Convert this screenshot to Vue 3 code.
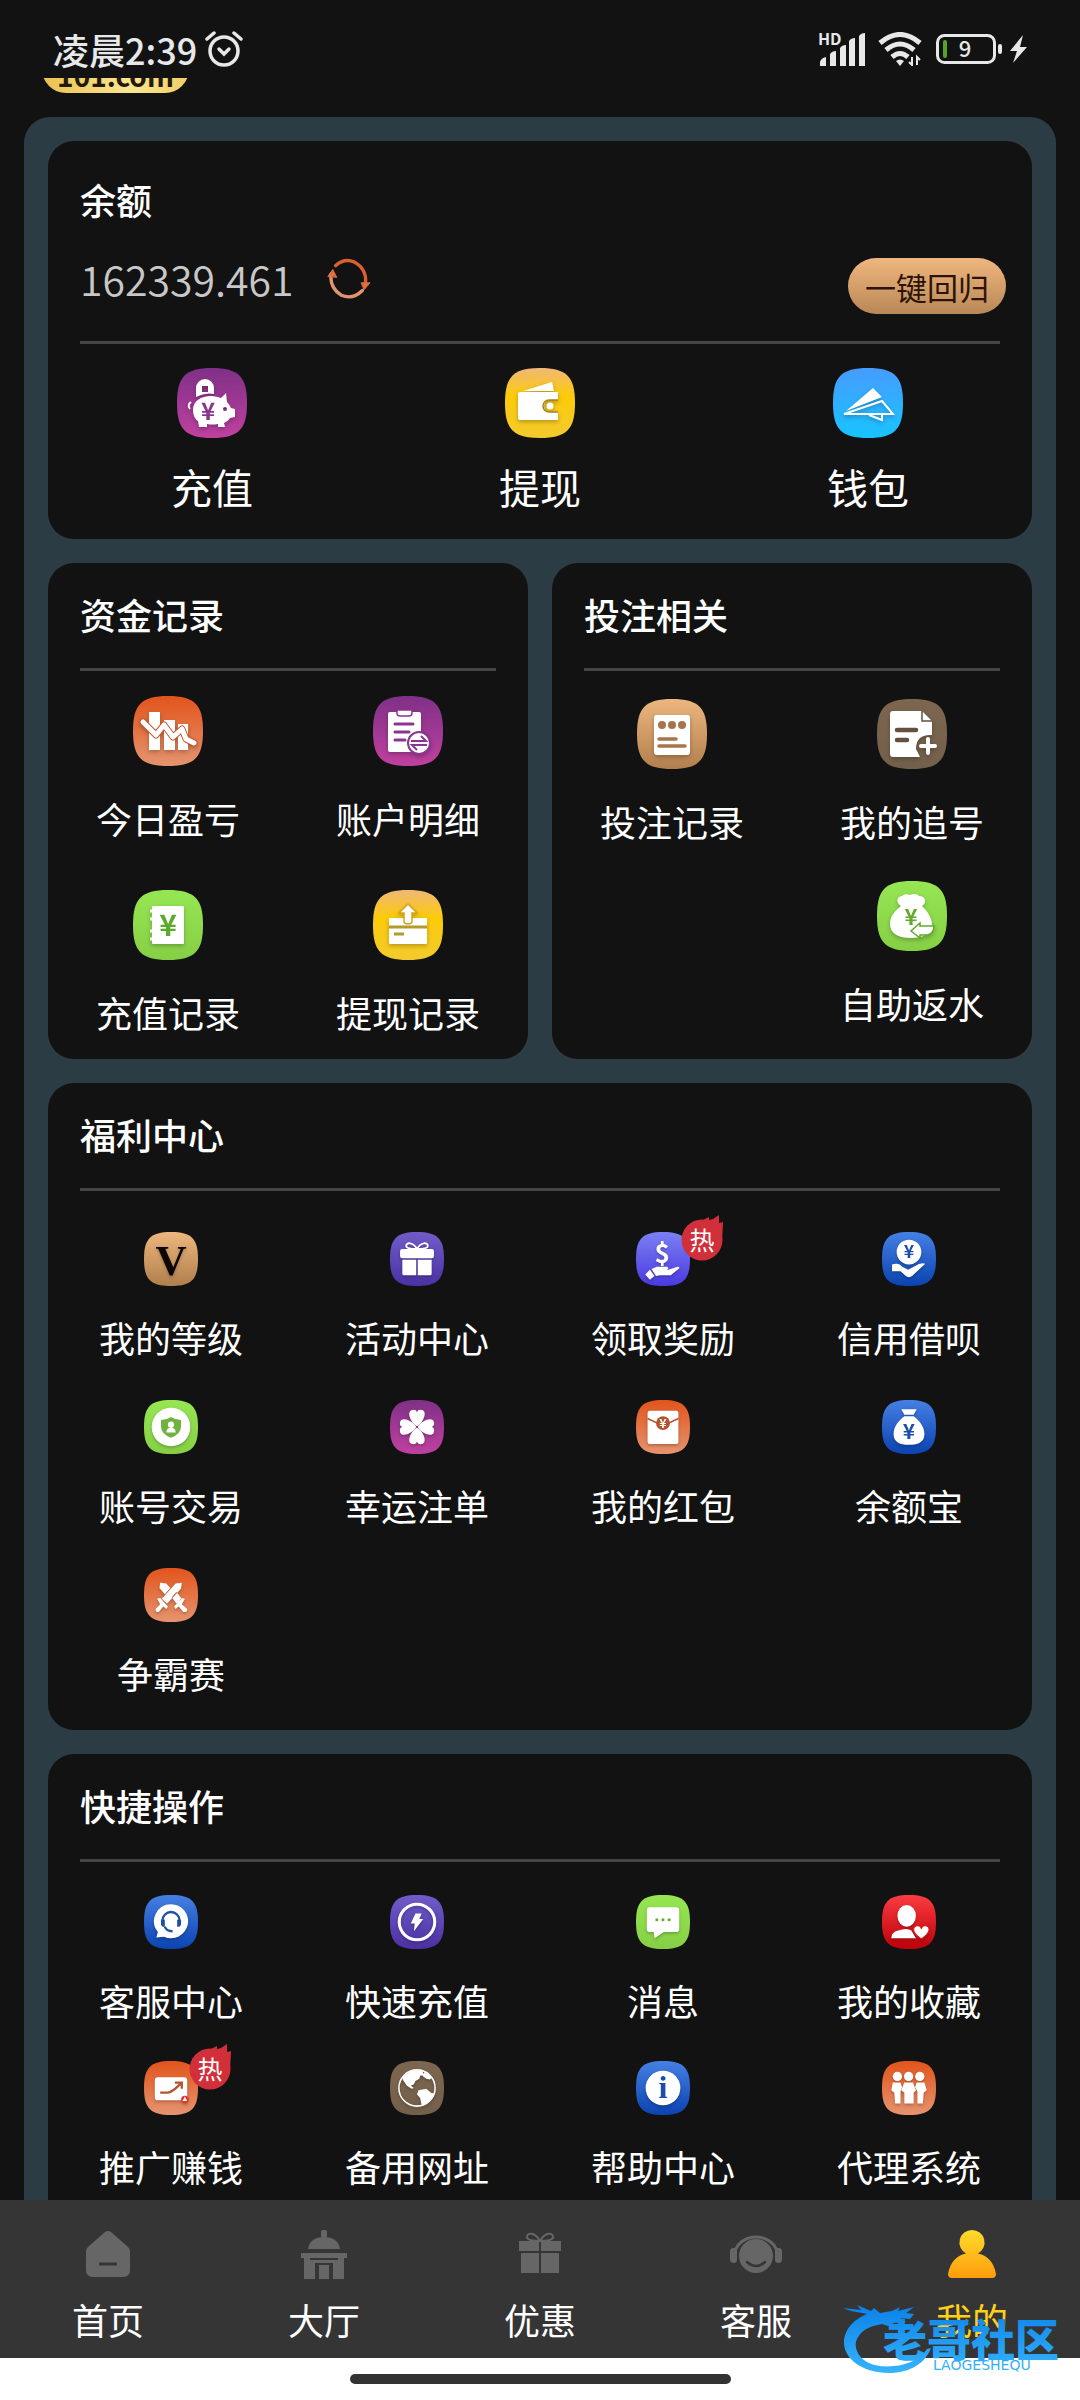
<script setup>
import { ref } from 'vue'

const balance = ref('162339.461')
const activeTab = ref('mine')

const gradients = [
  { id: 'orange', from: '#e2541c', to: '#e5946f' },
  { id: 'purple', from: '#7f3087', to: '#c0419f' },
  { id: 'green', from: '#96e653', to: '#86cf45' },
  { id: 'yellow', from: '#f0b878', mid: '#fccb08', to: '#f3ca2e' },
  { id: 'sky', from: '#469cff', to: '#18c4ff' },
  { id: 'bronze', from: '#edb67e', to: '#b17f4d' },
  { id: 'brown', from: '#7d664f', to: '#73604b' },
  { id: 'violet', from: '#705cc9', to: '#4b31a3' },
  { id: 'indigo', from: '#7c80f4', to: '#4a3ae2' },
  { id: 'blue', from: '#4580e4', to: '#0b43b0' },
  { id: 'red', from: '#fb3c41', to: '#bd0009' },
  { id: 'gold', from: '#ffdc2b', to: '#ff9d0c' }
]

const glyphs = {
  pig: `<path fill-rule="evenodd" d="M28 11a9 9 0 0 1 9 9v6q-9-2-18 3v-9a9 9 0 0 1 9-9zM25 18v6h6v-6z"/>
    <path d="M14 34q-4 3-1 7" stroke="#fff" stroke-width="2" fill="none"/>
    <path d="M16 42c0-9 8-14 18-14 4 0 7 1 10 2l5-5 1 9c2 2 3 4 4 6l4 1v8l-5 1c-2 3-4 4-6 5l1 4h-7v-3q-6 1-11 0v3h-8l-1-6c-3-2-5-6-5-11z"/>
    <circle cx="48" cy="41" r="2" fill="#7d2c85"/><text x="31" y="52" font-size="24" fill="#8a3590">¥</text>`,
  wallet: `<path d="M18 23L47 14l2 9z"/><path d="M15 24h38v8h-8a6 6 0 0 0 0 12h8v8H15q-2 0-2-2V26q0-2 2-2z"/>
    <path d="M53 32h-9a6 6 0 0 0 0 12h9" fill="none" stroke="#9e8423" stroke-width="1.500"/><circle cx="45" cy="38" r="3.500"/>`,
  plane: `<path d="M40 20L13 43l36-14z"/><path d="M49 33L11 46h49z" fill="none" stroke="#fff" stroke-width="2"/><path d="M36 47l13 5v-5" fill="none" stroke="#fff" stroke-width="2"/>`,
  loss: `<path d="M16 16h11v38H16zM31 24h11v30H31zM45 28h10v26H45z"/>
    <path d="M10 26L23 39l8-10 9 12 9-8 4 10 8 4" fill="none" stroke="#c4562b" stroke-width="7" stroke-linecap="round" stroke-linejoin="round"/>
    <path d="M10 26L23 39l8-10 9 12 9-8 4 10 8 4" fill="none" stroke="#fff" stroke-width="5" stroke-linecap="round" stroke-linejoin="round"/>`,
  clipboard: `<rect x="15" y="16" width="33" height="40" rx="2"/><path d="M24 14h15v3q0 3-3 3h-9q-3 0-3-3z" stroke="#8a3590" stroke-width="1.500"/>
    <path d="M22 28h18M22 36h14M22 44h10" stroke="#8a3590" stroke-width="3" stroke-linecap="round"/>
    <circle cx="46" cy="47" r="11" stroke="#8a3590" stroke-width="2"/><path d="M38 45h15l-5-5M54 49H39l5 5" fill="none" stroke="#8a3590" stroke-width="2"/>`,
  ledger: `<rect x="19" y="16" width="32" height="38" rx="1"/><path d="M17 21h4M17 29h4M17 41h4M17 49h4" stroke="#fff" stroke-width="3"/>
    <text x="35" y="46" font-size="30" fill="#5da92d">¥</text>`,
  cardUp: `<rect x="16" y="28" width="38" height="26" rx="1"/><path d="M16 37h38M21 44h10" stroke="#b39a2e" stroke-width="3"/>
    <path d="M35 14l9 9h-5v8q0 3-4 3t-4-3v-8h-5z" stroke="#d0a714" stroke-width="1.500"/>`,
  note: `<rect x="17" y="16" width="36" height="40" rx="3"/><g fill="#a3764c"><circle cx="25" cy="26" r="4"/><circle cx="35" cy="26" r="4"/><circle cx="45" cy="26" r="4"/></g>
    <path d="M22 40h17M22 47h26" stroke="#a3764c" stroke-width="3.500" stroke-linecap="round"/>`,
  docPlus: `<path d="M16 12h29l10 10v14q-16-1-16 14l4 8H16q-3 0-3-3V15q0-3 3-3z"/><path d="M45 12v10h10" fill="none" stroke="#63503e" stroke-width="1.500"/>
    <path d="M20 31h19M20 41h10" stroke="#63503e" stroke-width="4.500" stroke-linecap="round"/><path d="M51 40v14M44 47h14" stroke="#fff" stroke-width="4" stroke-linecap="round"/>`,
  bag: `<path d="M24 25c-5-3-5-9 1-10 2-2 5-2 8-1 4-2 8-1 9 1 7 0 8 7 3 10 6 6 10 12 10 19 0 9-9 13-21 13S13 53 13 43c0-8 5-13 11-18z"/>
    <text x="34" y="44" font-size="22" fill="#62a92e">¥</text><path d="M57 45H43v-3l-9 8 9 7v-3h8q6-2 6-9z" stroke="#62a92e" stroke-width="1.500"/>`,
  vip: `<text x="35" y="56" font-size="56" fill="#0c0704" class="serif">V</text>`,
  gift: `<path d="M35 22c-5-9-14-9-14-4q0 4 14 4c5-9 14-9 14-4q0 4-14 4z" fill="none" stroke="#fff" stroke-width="2.500"/>
    <rect x="13" y="22" width="44" height="12" rx="3"/><path d="M16 36h18v20H18q-2 0-2-2zM36 36h18v18q0 2-2 2H36z"/>`,
  reward: `<text x="34" y="40" font-size="34">$</text><path d="M12 55l6-6 6 8-6 5zM20 48l7-3h13q4 2 0 4h-7 9l12-4q4 0 1 3L45 56H31l-5 1z"/>`,
  credit: `<circle cx="35" cy="26" r="16"/><text x="35" y="34" font-size="23" fill="#1c4eaa">¥</text>
    <path d="M13 42q9-3 13 3l8 4 9-5q7-5 13-3L39 57q-4 3-8 0l-7-6H13z"/>`,
  shield: `<circle cx="35" cy="35" r="25"/><path d="M35 22q6 4 13 4v8q0 10-13 15-13-5-13-15v-8q7 0 13-4z" fill="#6fb23e"/>
    <circle cx="35" cy="32" r="4"/><path d="M29 42q0-6 6-6t6 6z"/>`,
  clover: `<g transform="rotate(0 35 35)"><path d="M35 34C26 29 21 14 29 13q5-1 6 3 1-4 6-3c8 1 3 16-6 21z"/></g>
    <path d="M35 34C26 29 21 14 29 13q5-1 6 3 1-4 6-3c8 1 3 16-6 21z" transform="rotate(90 35 35)"/>
    <path d="M35 34C26 29 21 14 29 13q5-1 6 3 1-4 6-3c8 1 3 16-6 21z" transform="rotate(180 35 35)"/>
    <path d="M35 34C26 29 21 14 29 13q5-1 6 3 1-4 6-3c8 1 3 16-6 21z" transform="rotate(270 35 35)"/>`,
  envelope: `<rect x="15" y="14" width="40" height="43" rx="3"/><path d="M15 24l13 6h14l13-6" fill="none" stroke="#b5532c" stroke-width="2"/>
    <circle cx="35" cy="30" r="9" fill="#b5532c"/><text x="35" y="36" font-size="16">¥</text>`,
  moneyBag: `<path d="M25 12h20l-4 7H29zM29 21h12c8 6 14 14 14 23 0 10-7 14-20 14s-20-4-20-14c0-9 6-17 14-23z"/>
    <text x="35" y="51" font-size="27" fill="#1c4eaa">¥</text>`,
  swords: `<path d="M49 19l-8 1-18 20 7 6 18-19zM21 19l8 1 5 6-7 8-7-8zM36 38l6-7 7 9-7 6zM17 40l4-1 10 11-2 3-4-3-6 7q-4 1-4-4l6-6zM53 40l-4-1-10 11 2 3 4-3 6 7q5 1 5-4l-7-6z"/>`,
  support: `<path d="M35 12a22 22 0 1 1-9 42l-10 1 2-7A22 22 0 0 1 35 12z"/><path d="M24 36v-3a11 11 0 0 1 22 0v3" fill="none" stroke="#1d4ea8" stroke-width="3"/>
    <path d="M22 32h5v9h-2q-3 0-3-4zM43 32h5v5q0 4-3 4h-2z" fill="#1d4ea8"/><path d="M27 41q2 6 10 6" fill="none" stroke="#1d4ea8" stroke-width="3"/>`,
  bolt: `<circle cx="35" cy="35" r="23" fill="none" stroke="#fff" stroke-width="4"/><path d="M33 24h8l-3 7h5L31 47l1-10h-5z"/>`,
  message: `<path d="M18 16h34q4 0 4 4v24q0 4-4 4H36l-12 8-1-8h-5q-4 0-4-4V20q0-4 4-4z"/><g fill="#62a92e"><circle cx="27" cy="32" r="2"/><circle cx="35" cy="32" r="2"/><circle cx="43" cy="32" r="2"/></g>`,
  favorite: `<ellipse cx="32" cy="27" rx="12" ry="14"/><path d="M12 56q0-8 9-10 11-4 17 0l6 10z"/>
    <path d="M51 57c-7-5-10-8-10-12 0-6 8-7 10-2 2-5 10-4 10 2 0 4-3 7-10 12z" stroke="#dc1b22" stroke-width="1.500"/>`,
  promo: `<rect x="14" y="21" width="42" height="30" rx="4"/><path d="M21 41h10q5 0 17-12M40 28h9v8" fill="none" stroke="#b5532c" stroke-width="3"/>
    <circle cx="53" cy="50" r="5" fill="#e0352f"/><path d="M53 46l3 6h-6z"/>`,
  globe: `<circle cx="35" cy="35" r="23.500" fill="none" stroke="#fff" stroke-width="2"/>
    <path d="M16 22q6-8 16-10l10 1 2 5-5 1-1 4-5 3-2 4-4 2 4 3-3 1-6-4-5-7zM45 14l9 7-2 3-5-1-5-4zM37 38l10-2 6 5 4 1q-2 10-11 14l-5 1-2-9-4-5z"/>`,
  info: `<circle cx="35" cy="35" r="22.500"/><text x="35" y="48" font-size="42" fill="#1d4ea8" class="serif">i</text>`,
  team: `<circle cx="20" cy="20" r="6"/><circle cx="34.500" cy="20" r="6"/><circle cx="49" cy="20" r="6"/>
    <path d="M14 28h10l2 6-2 6v15h-7l-1-14-4-3zM45 28h10l3 10-4 3-1 14h-7V40l-3-6zM29 28h11l4 10-3 3v14H29V41l-4-3z"/>`
}

const mainActions = [
  { label: '充值', glyph: 'pig', tone: 'purple' },
  { label: '提现', glyph: 'wallet', tone: 'yellow' },
  { label: '钱包', glyph: 'plane', tone: 'sky' }
]

const fundRecords = [
  { label: '今日盈亏', glyph: 'loss', tone: 'orange' },
  { label: '账户明细', glyph: 'clipboard', tone: 'purple' },
  { label: '充值记录', glyph: 'ledger', tone: 'green' },
  { label: '提现记录', glyph: 'cardUp', tone: 'yellow' }
]

const betItems = [
  { label: '投注记录', glyph: 'note', tone: 'bronze' },
  { label: '我的追号', glyph: 'docPlus', tone: 'brown' },
  { label: '自助返水', glyph: 'bag', tone: 'green', lastCol: true }
]

const sections = [
  {
    name: 'welfare',
    title: '福利中心',
    items: [
      { label: '我的等级', glyph: 'vip', tone: 'bronze' },
      { label: '活动中心', glyph: 'gift', tone: 'violet' },
      { label: '领取奖励', glyph: 'reward', tone: 'indigo', hot: true },
      { label: '信用借呗', glyph: 'credit', tone: 'blue' },
      { label: '账号交易', glyph: 'shield', tone: 'green' },
      { label: '幸运注单', glyph: 'clover', tone: 'purple' },
      { label: '我的红包', glyph: 'envelope', tone: 'orange' },
      { label: '余额宝', glyph: 'moneyBag', tone: 'blue' },
      { label: '争霸赛', glyph: 'swords', tone: 'orange' }
    ]
  },
  {
    name: 'quick',
    title: '快捷操作',
    items: [
      { label: '客服中心', glyph: 'support', tone: 'blue' },
      { label: '快速充值', glyph: 'bolt', tone: 'violet' },
      { label: '消息', glyph: 'message', tone: 'green' },
      { label: '我的收藏', glyph: 'favorite', tone: 'red' },
      { label: '推广赚钱', glyph: 'promo', tone: 'orange', hot: true },
      { label: '备用网址', glyph: 'globe', tone: 'brown' },
      { label: '帮助中心', glyph: 'info', tone: 'blue' },
      { label: '代理系统', glyph: 'team', tone: 'orange' }
    ]
  }
]

const tabs = [
  {
    id: 'home',
    label: '首页',
    icon: `<path d="M24 3q3-2 6 0l17 15q2 2 2 4v19q0 7-7 7H12q-7 0-7-7V22q0-2 2-4z"/><path d="M18 35h18" stroke="#353535" stroke-width="3"/>`
  },
  {
    id: 'hall',
    label: '大厅',
    icon: `<rect x="24" y="1" width="6" height="8" rx="2"/><path d="M11 20q2-12 16-12t16 12zM4 24h46v5h-3v21H36V34H18v16H7V29H4zM22 36h10v14H22z"/><path d="M13 30h28" stroke="#353535" stroke-width="2"/>`
  },
  {
    id: 'promo',
    label: '优惠',
    icon: `<path d="M27 12c-5-9-13-9-13-4q0 4 13 4c5-9 13-9 13-4q0 4-13 4z" fill="none" stroke="#666" stroke-width="2"/><path d="M6 12h20v10H6zM28 12h20v10H28zM8 24h18v20H8zM28 24h18v20H28z"/>`
  },
  {
    id: 'service',
    label: '客服',
    icon: `<circle cx="27" cy="27" r="17"/><path d="M6 22a22 20 0 0 1 42 0" fill="none" stroke="#666" stroke-width="3"/><rect x="1" y="19" width="7" height="15" rx="3.500"/><rect x="46" y="19" width="7" height="15" rx="3.500"/><path d="M18 33q9 8 18 0" fill="none" stroke="#353535" stroke-width="2.500" stroke-linecap="round"/>`
  },
  {
    id: 'mine',
    label: '我的',
    icon: `<path fill="url(#g-gold)" d="M27 1a12.500 12.500 0 0 1 6 23.500Q48 28 51 45q0 4-4 4H7q-4 0-4-4Q6 28 21 24.500A12.500 12.500 0 0 1 27 1z"/>`
  }
]
</script>

<template>
  <div class="app">
    <!-- gradients shared by all tiles -->
    <svg class="defs" width="0" height="0" aria-hidden="true">
      <defs>
        <linearGradient v-for="g in gradients" :id="'g-' + g.id" :key="g.id" x1="0" y1="0" x2="0" y2="1">
          <stop offset="0" :stop-color="g.from" />
          <stop v-if="g.mid" offset="0.4" :stop-color="g.mid" />
          <stop offset="1" :stop-color="g.to" />
        </linearGradient>
      </defs>
    </svg>

    <header class="status">
      <div class="clock">
        <span>凌晨2:39</span>
        <svg width="38" height="36" viewBox="0 0 38 36" fill="none" stroke="#e8e8e8" stroke-linecap="round">
          <circle cx="19" cy="20" r="14" stroke-width="3.500" />
          <path d="M14 18l5 5 5-5" stroke-width="3.500" />
          <path d="M2 8l7-6M36 8l-7-6" stroke-width="3.500" />
        </svg>
      </div>
      <div class="indicators">
        <svg width="48" height="34" viewBox="0 0 48 34" fill="#e8e8e8">
          <text x="0" y="13" font-size="16" font-weight="700">HD</text>
          <path d="M2 34v-4q1-4 6-5v9zM12 34V22q2-3 6-3v15zM22 34V16q2-3 6-3v21zM31 34V9q2-3 6-3v28zM41 34V4q2-3 6-3v33z" />
        </svg>
        <svg class="wifi" width="44" height="34" viewBox="0 0 44 34" fill="none" stroke="#e8e8e8" stroke-width="5">
          <path d="M2 11q20-17 40 0M8 18q14-12 28 0M14 25q8-7 16 0" />
          <path d="M18 29q4-3 8 0l-4 5z" fill="#e8e8e8" stroke="none" />
          <path d="M34 25v8l-3-3M39 33v-8l3 3" stroke-width="2" />
        </svg>
        <svg class="battery" width="66" height="30" viewBox="0 0 66 30">
          <rect x="1.5" y="1.5" width="57" height="27" rx="7" fill="none" stroke="#e8e8e8" stroke-width="3" />
          <rect x="7" y="6" width="4" height="18" rx="2" fill="#57a327" />
          <rect x="62" y="10" width="4" height="10" rx="2" fill="#e8e8e8" />
          <text x="29" y="23" font-size="22" font-weight="500" text-anchor="middle" fill="#e8e8e8">9</text>
        </svg>
        <svg width="18" height="30" viewBox="0 0 18 30" fill="#e8e8e8"><path d="M14 1L1 17h7L4 29l14-16h-7z" /></svg>
      </div>
    </header>

    <main class="scroller">
      <div class="site-row"><span class="site">101.com</span></div>

      <div class="panel">
        <section class="card balance-card">
          <h2>余额</h2>
          <div class="balance-row">
            <span class="amount">{{ balance }}</span>
            <button class="refresh" type="button" aria-label="刷新">
              <svg width="46" height="42" viewBox="0 0 46 44" fill="none" stroke-width="3.5" stroke-linecap="round">
                <path d="M9 8Q22-3 35 9q7 8 5 18" stroke="#db6031" />
                <path d="M4 17q-1 15 11 22 12 5 22-5" stroke="#e09470" />
                <path d="M36 26h9l-6 7zM1 19l5-7 4 8z" fill="#e07040" stroke="#e07040" stroke-width="1" />
              </svg>
            </button>
            <button class="collect" type="button">一键回归</button>
          </div>
          <hr />
          <nav class="grid three">
            <a v-for="item in mainActions" :key="item.label" href="#" class="item" @click.prevent>
              <svg class="tile" viewBox="0 0 70 70">
                <path :fill="`url(#g-${item.tone})`" d="M35 0C62 0 70 9 70 35S62 70 35 70 0 61 0 35 8 0 35 0z" />
                <g class="glyph" v-html="glyphs[item.glyph]"></g>
              </svg>
              <span>{{ item.label }}</span>
            </a>
          </nav>
        </section>

        <div class="pair">
          <section class="card funds">
            <h2>资金记录</h2>
            <hr />
            <nav class="grid two">
              <a v-for="item in fundRecords" :key="item.label" href="#" class="item" @click.prevent>
                <svg class="tile" viewBox="0 0 70 70">
                  <path :fill="`url(#g-${item.tone})`" d="M35 0C62 0 70 9 70 35S62 70 35 70 0 61 0 35 8 0 35 0z" />
                  <g class="glyph" v-html="glyphs[item.glyph]"></g>
                </svg>
                <span>{{ item.label }}</span>
              </a>
            </nav>
          </section>

          <section class="card bets">
            <h2>投注相关</h2>
            <hr />
            <nav class="grid two">
              <a
                v-for="item in betItems"
                :key="item.label"
                href="#"
                class="item"
                :class="{ 'last-col': item.lastCol }"
                @click.prevent
              >
                <svg class="tile" viewBox="0 0 70 70">
                  <path :fill="`url(#g-${item.tone})`" d="M35 0C62 0 70 9 70 35S62 70 35 70 0 61 0 35 8 0 35 0z" />
                  <g class="glyph" v-html="glyphs[item.glyph]"></g>
                </svg>
                <span>{{ item.label }}</span>
              </a>
            </nav>
          </section>
        </div>

        <section v-for="section in sections" :key="section.name" class="card" :class="section.name">
          <h2>{{ section.title }}</h2>
          <hr />
          <nav class="grid four">
            <a v-for="item in section.items" :key="item.label" href="#" class="item small" @click.prevent>
              <div class="tile-wrap">
                <svg class="tile" viewBox="0 0 70 70">
                  <path :fill="`url(#g-${item.tone})`" d="M35 0C62 0 70 9 70 35S62 70 35 70 0 61 0 35 8 0 35 0z" />
                  <g class="glyph" v-html="glyphs[item.glyph]"></g>
                </svg>
                <svg v-if="item.hot" class="hot" width="42" height="46" viewBox="0 0 42 46" fill="#d12f3a">
                  <circle cx="21" cy="25" r="20.5" />
                  <path d="M20 6l8-4v3l4-1 6-4v8l4-1-1 20z" />
                  <text x="21" y="35" font-size="25" text-anchor="middle" fill="#fff">热</text>
                </svg>
              </div>
              <span>{{ item.label }}</span>
            </a>
          </nav>
        </section>
      </div>
    </main>

    <footer class="bottom">
      <nav class="tabbar">
        <a
          v-for="tab in tabs"
          :key="tab.id"
          href="#"
          class="tab"
          :class="{ active: tab.id === activeTab }"
          @click.prevent="activeTab = tab.id"
        >
          <svg width="54" height="50" viewBox="0 0 54 50" fill="#666" v-html="tab.icon"></svg>
          <span>{{ tab.label }}</span>
        </a>
      </nav>
      <div class="gesture"><i></i></div>

      <svg class="stamp" width="222" height="74" viewBox="0 0 222 74">
        <defs>
          <linearGradient id="stamp-fill" gradientUnits="userSpaceOnUse" x1="0" y1="0" x2="0" y2="70">
            <stop offset="0" stop-color="#0b7fe8" />
            <stop offset="1" stop-color="#35b4fb" />
          </linearGradient>
        </defs>
        <g fill="url(#stamp-fill)">
          <path d="M0 5l18 2-4-5 14 6 3-3 6 5 12-2 8-4-2 4 16-4-8 6 8 1-4 5-10-1 6 4-12 1-6 3-6-2-9 2C18 27 11 36 13 45c4 15 20 20 38 18 14-1 26-7 33-17l4-1C82 61 66 70 46 70 20 70 0 56 1 38 2 24 14 15 24 11 16 9 8 9 0 5z" />
          <text x="40" y="54" font-size="44" font-weight="900">老哥社区</text>
          <text class="latin" x="90" y="67" font-size="14">LAOGESHEQU</text>
        </g>
      </svg>
    </footer>
  </div>
</template>

<style>
body {
  background: #121212;
}
</style>

<style scoped>
.app {
  height: 100vh;
  display: flex;
  flex-direction: column;
  background: #121212;
  color: #fff;
  font-family: "Noto Sans CJK SC", "Noto Sans", sans-serif;
  font-size: 36px;
  line-height: 40px;
}

.defs {
  position: absolute;
}

.status {
  box-sizing: border-box;
  flex: none;
  height: 78px;
  padding: 20px 53px 0;
  display: flex;
  align-items: center;
  justify-content: space-between;
  color: #e8e8e8;
  font-weight: 500;
}

.clock,
.indicators {
  display: flex;
  align-items: center;
}

.clock {
  gap: 8px;
}

.clock span {
  line-height: 36px;
}

.wifi {
  margin: 0 14px 0 12px;
}

.battery {
  margin-right: 7px;
}

.scroller {
  flex: 1;
  min-height: 0;
  overflow-y: auto;
  scrollbar-width: none;
}

.site-row {
  height: 15px;
  margin-left: 42px;
  overflow: hidden;
  display: flex;
  align-items: flex-end;
}

.site {
  width: 147px;
  padding: 12px 0 0;
  border-radius: 28px;
  background: radial-gradient(circle at 60% 80%, #fbe793, #e8bd4a);
  color: #241906;
  font-size: 28px;
  font-weight: 700;
  line-height: 36px;
  text-align: center;
}

.panel {
  margin: 24px 24px 0;
  padding: 24px;
  display: flex;
  flex-direction: column;
  gap: 24px;
  border-radius: 26px;
  background: #2c3c44;
}

.card {
  flex: 1;
  padding: 31px 0 27px;
  border-radius: 26px;
  background: #121212;
}

h2 {
  margin: 0 32px;
  font-size: 36px;
  font-weight: 500;
  line-height: 40px;
}

hr {
  height: 3px;
  margin: 34px 32px 25px;
  border: 0;
  background: #454545;
}

.balance-card {
  padding: 38px 0 33px;
}

.balance-row {
  margin: 39px 26px 0 32px;
  height: 56px;
  display: flex;
  align-items: flex-start;
}

.balance-card hr {
  margin: 27px 32px 24px;
}

.amount {
  color: #c8c8c8;
  font-size: 41px;
  font-weight: 350;
}

.refresh {
  margin-left: 32px;
  padding: 0;
  border: 0;
  background: none;
  line-height: 0;
  cursor: pointer;
}

.collect {
  margin-left: auto;
  height: 56px;
  padding: 0 17px;
  border: 0;
  border-radius: 28px;
  background: linear-gradient(#f0b67e, #b98857);
  color: #2b1407;
  font-family: inherit;
  font-size: 31px;
  cursor: pointer;
}

.pair {
  display: flex;
  gap: 24px;
}

.grid {
  display: grid;
}

.three {
  grid-template-columns: repeat(3, 1fr);
}

.three .item {
  gap: 28px;
  font-size: 41px;
}

.two {
  grid-template-columns: repeat(2, 1fr);
  row-gap: 52px;
}

.bets hr {
  margin-bottom: 28px;
}

.bets .grid {
  row-gap: 40px;
}

.last-col {
  grid-column: 2;
}

.four {
  grid-template-columns: repeat(4, 1fr);
  row-gap: 43px;
}

.welfare {
  padding-bottom: 37px;
}

.welfare hr {
  margin-bottom: 41px;
}

.quick {
  padding-bottom: 48px;
}

.quick hr {
  margin-bottom: 33px;
}

.quick .grid {
  row-gap: 41px;
}

.item {
  display: flex;
  flex-direction: column;
  align-items: center;
  gap: 32px;
  color: #fff;
  text-decoration: none;
  white-space: nowrap;
}

.item.small {
  gap: 31px;
}

.tile {
  display: block;
  width: 70px;
  height: 70px;
}

.small .tile {
  width: 54px;
  height: 54px;
}

.tile-wrap {
  position: relative;
}

.hot {
  position: absolute;
  left: 45px;
  top: -17px;
}

.glyph {
  fill: #fff;
  filter: drop-shadow(0 2px 2px rgba(0, 0, 0, 0.25));
}

.glyph :deep(text) {
  font-weight: 700;
  text-anchor: middle;
}

.glyph :deep(.serif) {
  font-family: "Liberation Serif", serif;
}

.bottom {
  flex: none;
  position: relative;
}

.tabbar {
  display: flex;
  height: 158px;
  background: #353535;
}

.tab {
  flex: 1;
  padding-top: 29px;
  display: flex;
  flex-direction: column;
  align-items: center;
  gap: 20px;
  color: #fff;
  text-decoration: none;
}

.tab.active {
  color: #ffd01a;
}

.gesture {
  height: 42px;
  display: flex;
  justify-content: center;
  align-items: center;
  background: #fff;
}

.gesture i {
  width: 381px;
  height: 10px;
  border-radius: 5px;
  background: #333;
}

.stamp {
  position: absolute;
  right: 15px;
  bottom: 23px;
  pointer-events: none;
}

.latin {
  font-family: "DejaVu Sans", sans-serif;
}
</style>
